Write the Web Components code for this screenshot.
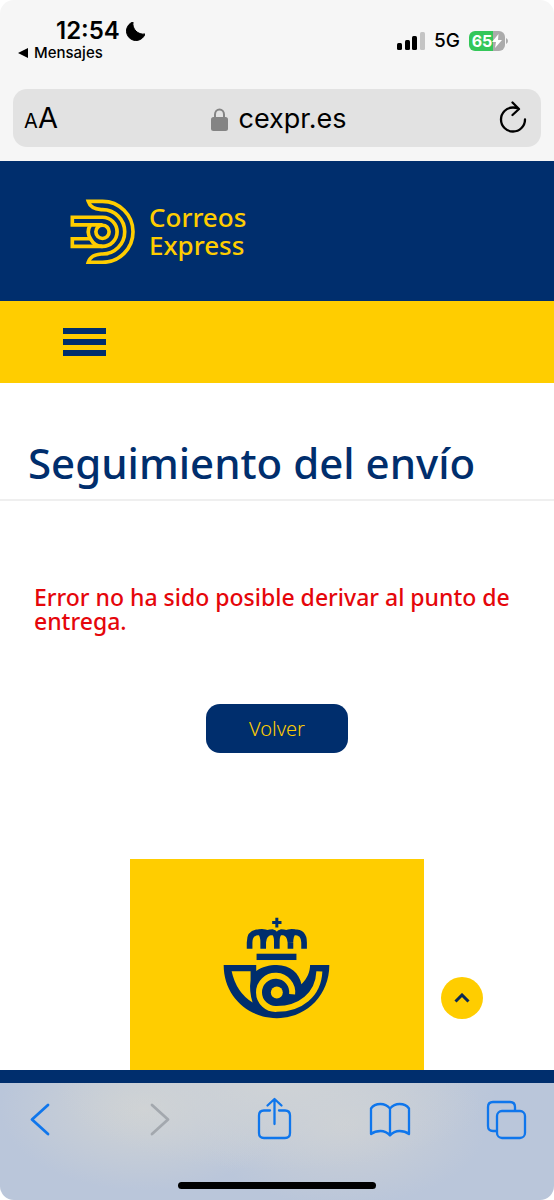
<!DOCTYPE html>
<html lang="es">
<head>
<meta charset="utf-8">
<meta name="viewport" content="width=device-width, initial-scale=1">
<title>Seguimiento del envío</title>
<style>
    body{
        margin:0;
        background:#fff;
        color:#002e6d;
        font-family:"Noto Sans", "Open Sans", sans-serif;
    }
</style>
</head>
<body>
<movil-pantalla>
    <barra-estado slot="arriba" hora="12:54" volver="Mensajes" red="5G" bateria="65"></barra-estado>
    <barra-direccion slot="arriba" url="cexpr.es"></barra-direccion>
    <sitio-cabecera>Correos Express</sitio-cabecera>
    <sitio-menu></sitio-menu>
    <seguimiento-envio>
        <span slot="titulo">Seguimiento del envío</span>
        <span slot="error">Error no ha sido posible derivar al punto de entrega.</span>
        <span slot="boton">Volver</span>
    </seguimiento-envio>
    <sitio-pie></sitio-pie>
    <barra-navegador slot="abajo"></barra-navegador>
</movil-pantalla>

<script>
class movilPantalla extends HTMLElement{
    constructor(){
        super();
        this.attachShadow({ mode: "open" });
        this.shadowRoot.innerHTML = `
        <style>
            :host{
                display:flex;
                flex-direction:column;
                min-height:100vh;
            }
            .arriba{
                background:#f6f6f6;
                border-radius:14px 14px 0 0;
            }
            main{
                flex:1;
                display:flex;
                flex-direction:column;
            }
        </style>
        <div class="arriba"><slot name="arriba"></slot></div>
        <main><slot></slot></main>
        <slot name="abajo"></slot>
        `
    }
}
customElements.define("movil-pantalla",movilPantalla);

class barraEstado extends HTMLElement{
    constructor(){
        super();
        this.attachShadow({ mode: "open" });
        this.shadowRoot.innerHTML = `
        <style>
            :host{
                display:flex;
                justify-content:space-between;
                padding:18px 46px 14px 18px;
                color:#000;
                font-family:Inter, "Liberation Sans", sans-serif;
            }
            .hora{
                display:flex;
                align-items:center;
                gap:6px;
                padding-left:38px;
                font-size:24px;
                font-weight:600;
                line-height:26px;
            }
            a{
                display:flex;
                align-items:center;
                gap:6px;
                color:#000;
                font-size:15px;
                font-weight:500;
                line-height:18px;
                text-decoration:none;
            }
            .derecha{
                display:flex;
                align-items:center;
                gap:9px;
                font-size:19px;
                font-weight:500;
                line-height:20px;
                height:46px;
            }
            .bateria{
                display:flex;
                align-items:center;
            }
            .carga{
                display:flex;
                align-items:center;
                justify-content:center;
                width:36px;
                height:20px;
                border-radius:6px;
                background:linear-gradient(90deg, #34c759 66%, #ababab 66%);
                color:#fff;
                font-size:16px;
                font-weight:700;
            }
        </style>
        <div>
            <div class="hora">
                <span class="textoHora"></span>
                <svg width="19" height="19" viewBox="0 0 19 19"><path d="M7 0A9.500 9.500 0 1 0 19 12A10.500 10.500 0 0 1 7 0Z" stroke="#000"/></svg>
            </div>
            <a href="#"><svg width="10" height="10" viewBox="0 0 10 10"><path d="M10 0V10L0 5Z"/></svg><span class="textoVolver"></span></a>
        </div>
        <div class="derecha">
            <svg width="28" height="18" viewBox="0 0 28 18">
                <rect x="0" y="11" width="5" height="7" rx="1.500"/>
                <rect x="8" y="8" width="5" height="10" rx="1.500"/>
                <rect x="15" y="4" width="5" height="14" rx="1.500"/>
                <rect x="23" y="0" width="5" height="18" rx="1.500" fill="#c4c4c4"/>
            </svg>
            <span class="red"></span>
            <div class="bateria">
                <div class="carga">
                    <span class="nivel"></span>
                    <svg width="10" height="14" viewBox="0 0 10 14"><path d="M6.500 0L0 8H4L3 14L10 6H6Z" fill="#fff"/></svg>
                </div>
                <svg width="3" height="6" viewBox="0 0 3 6"><path d="M1 0Q3 1 3 3T1 6Z" fill="#ababab"/></svg>
            </div>
        </div>
        `
    }
    connectedCallback(){
        this.shadowRoot.querySelector(".textoHora").textContent = this.getAttribute("hora");
        this.shadowRoot.querySelector(".textoVolver").textContent = this.getAttribute("volver");
        this.shadowRoot.querySelector(".red").textContent = this.getAttribute("red");
        this.shadowRoot.querySelector(".nivel").textContent = this.getAttribute("bateria");
    }
}
customElements.define("barra-estado",barraEstado);

class barraDireccion extends HTMLElement{
    constructor(){
        super();
        this.attachShadow({ mode: "open" });
        this.shadowRoot.innerHTML = `
        <style>
            :host{
                display:block;
                padding:11px 13px 14px;
                color:#000;
                font-family:Inter, "Liberation Sans", sans-serif;
            }
            .campo{
                display:grid;
                grid-template-columns:52px 1fr 48px;
                align-items:center;
                height:58px;
                padding-top:2px;
                box-sizing:border-box;
                border-radius:14px;
                background:#e2e2e2;
            }
            button{
                border:0;
                padding:0;
                background:none;
                color:inherit;
                font-family:inherit;
                font-size:29px;
                line-height:36px;
            }
            .letra{
                padding-left:4px;
            }
            small{
                font-size:20px;
            }
            .url{
                display:flex;
                align-items:center;
                justify-content:center;
                gap:10px;
                font-size:27px;
                line-height:36px;
            }
            svg{
                display:block;
            }
            .recargar{
                justify-self:center;
                padding:0 8px 4px 0;
            }
        </style>
        <div class="campo">
            <button class="letra"><small>A</small>A</button>
            <div class="url">
                <svg width="17" height="23" viewBox="0 0 17 23"><path d="M4 11V6.500a4.500 5 0 0 1 9 0V11" fill="none" stroke="#848484" stroke-width="2"/><rect y="9" width="17" height="14" rx="2.500" fill="#848484"/></svg>
                <span class="textoUrl"></span>
            </div>
            <button class="recargar" aria-label="Recargar">
                <svg width="28" height="32" viewBox="0 0 28 32" fill="none" stroke="#000" stroke-width="2.300" stroke-linecap="round" stroke-linejoin="round"><path d="M26 18.500A12 12 0 1 1 14 6.500Q17 6.500 19.500 7.500M13.500 1.500L20 8L13.500 14"/></svg>
            </button>
        </div>
        `
    }
    connectedCallback(){
        this.shadowRoot.querySelector(".textoUrl").textContent = this.getAttribute("url");
    }
}
customElements.define("barra-direccion",barraDireccion);

class sitioCabecera extends HTMLElement{
    constructor(){
        super();
        this.attachShadow({ mode: "open" });
        this.shadowRoot.innerHTML = `
        <style>
            :host{
                display:flex;
                align-items:center;
                gap:14px;
                height:140px;
                padding:0 70px;
                background:#002e6d;
                color:#ffcd00;
            }
            .nombre{
                width:min-content;
                font-size:26px;
                font-weight:500;
                line-height:28px;
            }
        </style>
        <svg width="65" height="65" viewBox="62 42 196 196" fill="none" stroke="#ffcd00" stroke-width="11">
            <path d="M117 49H160A92 92 0 0 1 160 233H117Q124 210 156 208H160A67 67 0 0 0 160 74H156Q124 72 117 49Z"/>
            <path d="M124 120H69V97H160A44 44 0 0 1 160 185H69V162H124"/>
            <path d="M160 120H124Q110 141 124 162Q136 185 160 185"/>
            <circle cx="160" cy="141" r="20"/>
        </svg>
        <div class="nombre"><slot></slot></div>
        `
    }
}
customElements.define("sitio-cabecera",sitioCabecera);

class sitioMenu extends HTMLElement{
    constructor(){
        super();
        this.attachShadow({ mode: "open" });
        this.shadowRoot.innerHTML = `
        <style>
            :host{
                display:flex;
                align-items:center;
                height:82px;
                padding:0 63px;
                background:#ffcd00;
            }
            button{
                display:flex;
                flex-direction:column;
                gap:5px;
                width:43px;
                padding:0;
                border:0;
                background:none;
            }
            span{
                width:100%;
                height:6px;
                background:#002e6d;
            }
        </style>
        <button aria-label="Menú"><span></span><span></span><span></span></button>
        `
    }
}
customElements.define("sitio-menu",sitioMenu);

class seguimientoEnvio extends HTMLElement{
    constructor(){
        super();
        this.attachShadow({ mode: "open" });
        this.shadowRoot.innerHTML = `
        <style>
            :host{
                display:block;
            }
            h1{
                margin:0;
                padding:52px 28px 8px;
                border-bottom:2px solid #efefef;
                font-size:42px;
                font-weight:500;
                line-height:56px;
            }
            p{
                margin:0;
                padding:84px 34px 71px;
                color:#e5060b;
                font-size:23px;
                font-weight:500;
                line-height:24px;
            }
            button{
                display:block;
                width:142px;
                height:49px;
                margin:0 auto 106px;
                border:0;
                border-radius:14px;
                background:#002e6d;
                color:#ffcd00;
                font-family:inherit;
                font-size:20px;
                font-weight:300;
            }
        </style>
        <h1><slot name="titulo"></slot></h1>
        <p><slot name="error"></slot></p>
        <button><slot name="boton"></slot></button>
        `
    }
}
customElements.define("seguimiento-envio",seguimientoEnvio);

class sitioPie extends HTMLElement{
    constructor(){
        super();
        this.attachShadow({ mode: "open" });
        this.shadowRoot.innerHTML = `
        <style>
            :host{
                display:block;
                position:relative;
                border-bottom:13px solid #002e6d;
            }
            .tarjeta{
                display:flex;
                justify-content:center;
                width:53%;
                margin:0 auto;
                padding:58px 0 51px;
                box-sizing:border-box;
                background:#ffcd00;
            }
            /* flota sobre el pie */
            button{
                position:absolute;
                right:71px;
                bottom:51px;
                display:flex;
                align-items:center;
                justify-content:center;
                width:42px;
                height:42px;
                padding:0;
                border:0;
                border-radius:50%;
                background:#ffcd00;
            }
        </style>
        <div class="tarjeta">
            <svg width="107" height="102" viewBox="38 36 322 306" fill="none">
                <path d="M200 38V67M186 52H214" stroke="#002e6d" stroke-width="9"/>
                <path d="M118 131V112Q118 81 148 81Q159 88 159 112V131M159 112Q161 81 186 81Q200 84 200 110V131M282 131V112Q282 81 252 81Q241 88 241 112V131M241 112Q239 81 214 81Q200 84 200 110M146 81Q160 78 174 84M254 81Q240 78 226 84" stroke="#002e6d" stroke-width="17"/>
                <rect x="139" y="146" width="120" height="19" fill="#002e6d"/>
                <path d="M40 180H138V198C155 186 178 180 200 180C240 180 268 205 274 238C292 220 300 200 300 180H358C358 275 285 340 200 340S40 275 40 180Z" fill="#002e6d"/>
                <path d="M64 199H121V226Q116 258 127 293Q78 263 64 199Z" fill="#ffcd00"/>
                <path d="M246 268A50 50 0 1 0 200 312C270 312 325 270 328 199" stroke="#ffcd00" stroke-width="18"/>
                <circle cx="200" cy="263" r="18" fill="#ffcd00"/>
            </svg>
        </div>
        <button aria-label="Subir"><svg width="16" height="10" viewBox="0 0 16 10"><path d="M1.500 8.500L8 2L14.500 8.500" fill="none" stroke="#0b2a55" stroke-width="3"/></svg></button>
        `
    }
}
customElements.define("sitio-pie",sitioPie);

class barraNavegador extends HTMLElement{
    constructor(){
        super();
        this.attachShadow({ mode: "open" });
        this.shadowRoot.innerHTML = `
        <style>
            :host{
                display:block;
                padding:14px 0 11px;
                border-radius:0 0 14px 14px;
                background:radial-gradient(ellipse 40% 75% at 50% 0, #cfd3d6, #cfd3d600), radial-gradient(ellipse 26% 70% at 26% 22%, #d0d3d4, #d0d3d400), radial-gradient(ellipse 26% 70% at 62% 35%, #ccd0d5, #ccd0d500), #bac6da;
            }
            nav{
                display:flex;
                justify-content:space-between;
                padding:0 25px 0 18px;
            }
            button{
                width:44px;
                height:44px;
                padding:0;
                border:0;
                background:none;
                color:#0f76ec;
            }
            button:disabled{
                color:#a3a8ae;
            }
            svg{
                display:block;
                fill:none;
                stroke:currentColor;
                stroke-width:2.300;
                stroke-linecap:round;
                stroke-linejoin:round;
            }
            .inicio{
                width:198px;
                height:7px;
                margin:41px auto 0;
                border-radius:4px;
                background:#000;
            }
        </style>
        <nav>
            <button aria-label="Atrás"><svg width="44" height="44" viewBox="0 0 44 44"><path d="M30 8L14 22.500L30 37" stroke-width="2.800"/></svg></button>
            <button aria-label="Adelante" disabled><svg width="44" height="44" viewBox="0 0 44 44"><path d="M17 8L33 22.500L17 37" stroke-width="2.800"/></svg></button>
            <button aria-label="Compartir"><svg width="44" height="44" viewBox="0 0 44 44"><path d="M18 13.500H12Q7 13.500 7 18.500V36Q7 41 12 41H33Q38 41 38 36V18.500Q38 13.500 33 13.500H27M22.500 27V2.500M15.500 8.500L22.500 2L29.500 8.500"/></svg></button>
            <button aria-label="Marcadores"><svg width="44" height="44" viewBox="0 0 44 44"><path d="M22 11.500Q18 7 12.500 7Q6 7 3 11.500V37Q7 34 12.500 34Q18 34 22 38.500Q26 34 31.500 34Q37 34 41 37V11.500Q38 7 31.500 7Q26 7 22 11.500V38"/></svg></button>
            <button aria-label="Pestañas"><svg width="44" height="44" viewBox="0 0 44 44"><path d="M11 34H8Q3 34 3 29V10Q3 5 8 5H25Q30 5 30 10V13"/><rect x="12" y="14" width="28" height="27" rx="5"/></svg></button>
        </nav>
        <div class="inicio"></div>
        `
    }
}
customElements.define("barra-navegador",barraNavegador);
</script>
</body>
</html>
